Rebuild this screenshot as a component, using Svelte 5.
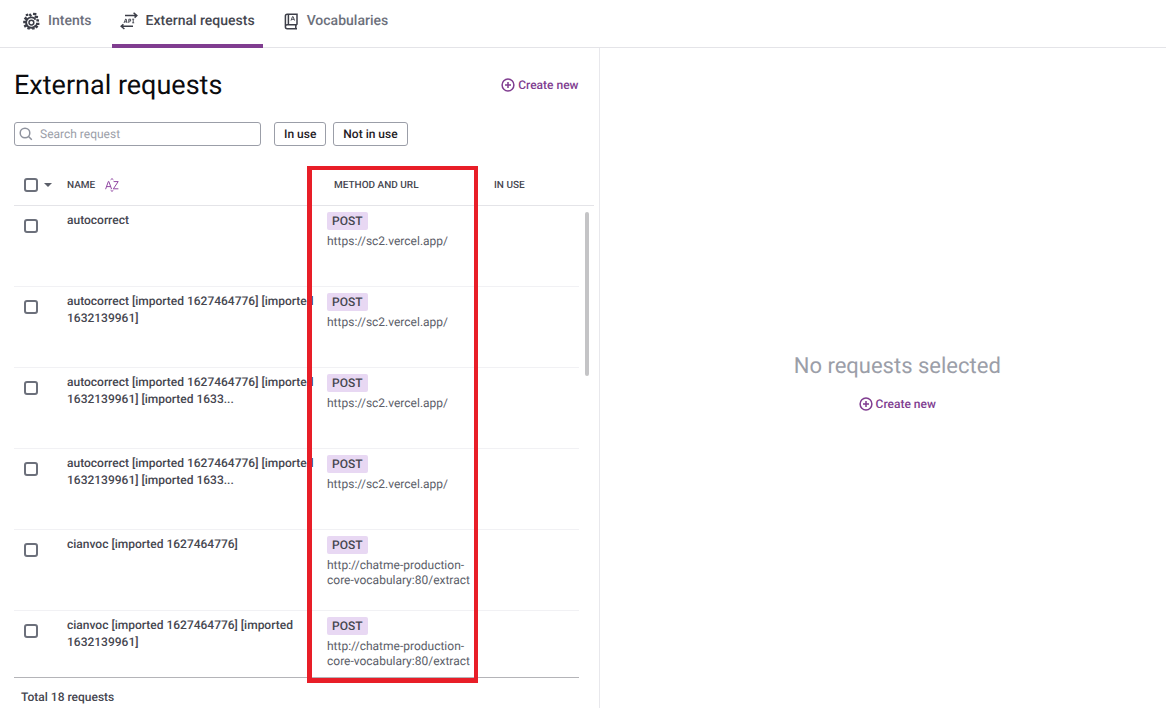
<script lang="ts">
  type ExternalRequest = {
    id: number;
    name: string;
    method: string;
    url: string;
  };

  const tabs = [
    { id: 'intents', label: 'Intents' },
    { id: 'requests', label: 'External requests' },
    { id: 'vocabularies', label: 'Vocabularies' }
  ];

  const total = 18;

  const requests: ExternalRequest[] = [
    { id: 1, name: 'autocorrect', method: 'POST', url: 'https://sc2.vercel.app/' },
    { id: 2, name: 'autocorrect [imported 1627464776] [imported 1632139961]', method: 'POST', url: 'https://sc2.vercel.app/' },
    { id: 3, name: 'autocorrect [imported 1627464776] [imported 1632139961] [imported 1633...', method: 'POST', url: 'https://sc2.vercel.app/' },
    { id: 4, name: 'autocorrect [imported 1627464776] [imported 1632139961] [imported 1633...', method: 'POST', url: 'https://sc2.vercel.app/' },
    { id: 5, name: 'cianvoc [imported 1627464776]', method: 'POST', url: 'http://chatme-production-core-vocabulary:80/extract' },
    { id: 6, name: 'cianvoc [imported 1627464776] [imported 1632139961]', method: 'POST', url: 'http://chatme-production-core-vocabulary:80/extract' }
  ];

  let activeTab = $state('requests');
  let search = $state('');
  let selected = $state<number[]>([]);

  let visible = $derived(
    requests.filter((item) => item.name.toLowerCase().includes(search.toLowerCase()))
  );

  function toggleAll(event: Event) {
    const checked = (event.currentTarget as HTMLInputElement).checked;
    selected = checked ? requests.map((item) => item.id) : [];
  }
</script>

{#snippet createButton()}
  <button class="create" type="button">
    <svg width="14" height="14" viewBox="0 0 14 14" fill="none" stroke="currentColor" stroke-width="1.5" aria-hidden="true">
      <circle cx="7" cy="7" r="5.9" />
      <path d="M7 4v6M4 7h6" />
    </svg>
    Create new
  </button>
{/snippet}

<div class="page">
  <nav class="tabs">
    {#each tabs as tab}
      <button
        class="tab"
        class:active={activeTab === tab.id}
        type="button"
        onclick={() => (activeTab = tab.id)}
      >
        {#if tab.id === 'intents'}
          <svg width="18" height="18" viewBox="0 0 18 18" fill="none" stroke="currentColor" aria-hidden="true">
            <circle cx="9.4" cy="10.6" r="2.4" stroke-width="1.5" />
            <path d="M13.6 7.6a5.2 5.2 0 1 0 .4 5.2" stroke-width="1.9" />
            <path d="M2.6 5.6l2.6 2M1.2 10h3M2.2 14.6l2.6-1.4M6.2 17.4l1-2.6M11.6 17.6l-.6-2.8M15.6 15.6l-2.2-1.8" stroke-width="2.6" />
            <path d="M3.8 3.2l2.4-.6M7.4 2l1.8 2.2M11 1.8l3.4.4M12.6 4.6l3.4.6M14.4 8.2l2.6.4M14 11.8h3.4" stroke-width="2.2" />
          </svg>
        {:else if tab.id === 'requests'}
          <svg width="18" height="18" viewBox="0 0 18 18" fill="none" stroke="currentColor" stroke-width="1.5" aria-hidden="true">
            <path d="M5 3.6h12M13.6.8l3.2 2.8-2.2 2M13 14.2H1M4.4 17l-3.2-2.8 2.2-2" />
            <path d="M4 11l1.6-4h.5l.9 4M4.8 9.8h2M8.8 11V7.2h1.8v1.9H8.8M12.2 7.2h2M13.2 7.2v3.6M12.2 10.8h2" stroke-width="0.9" />
          </svg>
        {:else}
          <svg width="16" height="18" viewBox="0 0 16 18" fill="none" stroke="currentColor" stroke-width="1.5" aria-hidden="true">
            <path d="M14 12.8V2.2H4.2c-1.1 0-1.8.8-1.8 1.8v11c0 1 .8 1.7 1.8 1.7H14M14 12.8H4.2c-2.4 0-2.4 3.9 0 3.9M5.4 2.2v10.6M12.8 12.8v3.9" />
            <path d="M8 8.6l1.5-4h.6l1.5 4M8.5 7.3h2.6" stroke-width="0.9" />
          </svg>
        {/if}
        {tab.label}
      </button>
    {/each}
  </nav>

  <main class="content">
    <section class="list-panel">
      <header class="heading">
        <h1>External requests</h1>
        {@render createButton()}
      </header>

      <div class="filters">
        <label class="search">
          <svg width="14" height="14" viewBox="0 0 14 14" fill="none" stroke="currentColor" stroke-width="1.5" aria-hidden="true">
            <circle cx="6" cy="6" r="4.8" />
            <path d="M9.5 9.5l3.3 3.3" />
          </svg>
          <input type="text" placeholder="Search request" aria-label="Search request" bind:value={search} />
        </label>
        <button class="filter" type="button">In use</button>
        <button class="filter" type="button">Not in use</button>
      </div>

      <div class="table-area">
        <div class="table-clip">
          <table>
            <colgroup>
              <col class="col-check" />
              <col class="col-name" />
              <col class="col-method" />
              <col />
              <col class="col-gutter" />
            </colgroup>
            <thead>
              <tr>
                <th>
                  <div class="check-all">
                    <input
                      type="checkbox"
                      aria-label="Select all requests"
                      checked={selected.length === requests.length}
                      onchange={toggleAll}
                    />
                    <button class="caret" type="button" aria-label="Selection options"></button>
                  </div>
                </th>
                <th>
                  <div class="sortable">
                    Name
                    <button class="sort" type="button" aria-label="Sort by name">
                      <svg width="14" height="14" viewBox="0 0 14 14" fill="none" stroke="currentColor" aria-hidden="true">
                        <path d="M.6 11.2L3.4 3.4h.4l2.8 7.8M1.6 8.6h4M8.6 3.6h4.6l-4.8 7.2h5" />
                        <path d="M5.6 1.8L7 .6l1.4 1.2M5.6 12.2L7 13.4l1.4-1.2" />
                      </svg>
                    </button>
                  </div>
                </th>
                <th class="method-head">Method and URL</th>
                <th>In use</th>
                <th></th>
              </tr>
            </thead>
            <tbody>
              {#each visible as item (item.id)}
                <tr>
                  <td class="check">
                    <input type="checkbox" aria-label={item.name} value={item.id} bind:group={selected} />
                  </td>
                  <td class="name">{item.name}</td>
                  <td class="method">
                    <span class="badge">{item.method}</span>
                    <div class="url">{item.url}</div>
                  </td>
                  <td></td>
                  <td class="gutter"></td>
                </tr>
              {/each}
            </tbody>
          </table>
        </div>
        <div class="scroll-thumb"></div>
        <div class="highlight"></div>
      </div>

      <footer class="total">Total {total} requests</footer>
    </section>

    <section class="detail-panel">
      <p class="empty">No requests selected</p>
      {@render createButton()}
    </section>
  </main>
</div>

<style>
  :global(body) {
    margin: 0;
    background: #fff;
  }

  .page {
    display: flex;
    flex-direction: column;
    height: 100vh;
    box-sizing: border-box;
    font-family: Roboto, 'Liberation Sans', sans-serif;
    font-size: 12px;
    text-rendering: geometricPrecision;
    color: #45464f;
  }

  button {
    padding: 0;
    border: 0;
    background: none;
    font: inherit;
    color: inherit;
    text-rendering: inherit;
    cursor: pointer;
  }

  .tabs {
    display: flex;
    flex: none;
    gap: 12px;
    height: 47px;
    padding-left: 14px;
    border-bottom: 1px solid #e4e4e8;
  }

  .tab {
    display: flex;
    align-items: center;
    gap: 8px;
    margin-bottom: -1px;
    padding: 0 8px 3px;
    border-bottom: 4px solid transparent;
    font-size: 14px;
    font-weight: 500;
    color: #6c707b;
  }

  .tab svg {
    color: #3c3e48;
  }

  .tab.active {
    border-bottom-color: #803d90;
    color: #45464f;
  }

  .content {
    display: flex;
    flex: 1;
    min-height: 0;
  }

  .list-panel {
    display: flex;
    flex-direction: column;
    width: 51.5%;
    box-sizing: border-box;
    padding: 0 5px 0 14px;
    border-right: 1px solid #e8e8ec;
  }

  .heading {
    display: flex;
    align-items: center;
    justify-content: space-between;
    height: 74px;
    padding-right: 16px;
  }

  h1 {
    margin: 0;
    font-size: 27px;
    font-weight: 400;
    color: #0c0c0e;
  }

  .create {
    display: flex;
    align-items: center;
    gap: 3px;
    font-size: 12px;
    font-weight: 500;
    color: #803d90;
  }

  .filters {
    display: flex;
    gap: 7px;
    height: 24px;
    margin-bottom: 19px;
  }

  .search {
    display: flex;
    align-items: center;
    gap: 7px;
    width: 247px;
    margin-right: 6px;
    padding: 0 4px;
    box-sizing: border-box;
    border: 1px solid #9b9ea8;
    border-radius: 3px;
    color: #8f939e;
  }

  .search input {
    flex: 1;
    min-width: 0;
    padding: 0;
    border: 0;
    outline: 0;
    background: none;
    font: inherit;
    text-rendering: inherit;
    color: #45464f;
  }

  .search input::placeholder {
    color: #9b9ea8;
  }

  .filter {
    padding: 0 9px;
    border: 1px solid #9b9ea8;
    border-radius: 3px;
    font-weight: 500;
    color: #1f2026;
  }

  .table-area {
    position: relative;
    flex: 1;
    min-height: 0;
  }

  .table-clip {
    height: 100%;
    overflow: hidden;
  }

  table {
    width: 100%;
    table-layout: fixed;
    border-collapse: separate;
    border-spacing: 0;
  }

  .col-check {
    width: 53px;
  }

  .col-name {
    width: 260px;
  }

  .col-method {
    width: 167px;
  }

  .col-gutter {
    width: 15px;
  }

  th {
    height: 40px;
    padding: 0;
    border-bottom: 1px solid #e4e4e8;
    font-size: 10px;
    font-weight: 500;
    text-align: left;
    text-transform: uppercase;
  }

  .method-head {
    padding-left: 7px;
  }

  .check-all,
  .sortable {
    display: flex;
    align-items: center;
  }

  .check-all {
    gap: 6px;
    padding-left: 10px;
  }

  .sortable {
    gap: 10px;
  }

  .sort {
    display: flex;
    color: #9148a3;
  }

  .caret {
    border: 4px solid transparent;
    border-top-color: #5b5e69;
    border-bottom: 0;
  }

  input[type='checkbox'] {
    appearance: none;
    display: block;
    width: 14px;
    height: 14px;
    margin: 0;
    border: 2px solid #6c707b;
    border-radius: 3px;
  }

  input[type='checkbox']:checked {
    border-color: #803d90;
    background: #803d90;
  }

  td {
    height: 81px;
    box-sizing: border-box;
    padding: 0;
    border-bottom: 1px solid #f1f1f4;
    vertical-align: top;
  }

  td.gutter {
    border-bottom: 0;
  }

  td.check {
    padding: 13px 0 0 10px;
  }

  td.name {
    padding: 6px 12px 0 0;
    font-weight: 500;
    line-height: 17px;
  }

  td.method {
    padding: 6px 20px 0 0;
  }

  .badge {
    display: block;
    width: fit-content;
    padding: 0 5px;
    border-radius: 2px;
    background: #e8d8f3;
    font-weight: 500;
    line-height: 18px;
  }

  .url {
    margin-top: 4px;
    line-height: 15px;
    color: #5b5e69;
  }

  .scroll-thumb {
    position: absolute;
    top: 47px;
    right: 5px;
    width: 4px;
    height: 164px;
    border-radius: 2px;
    background: #c4c4c6;
  }

  .highlight {
    position: absolute;
    top: 1px;
    bottom: -6px;
    left: 293px;
    width: 171px;
    box-sizing: border-box;
    border: 5px solid #e81e28;
    border-width: 4px 4px 5px 5px;
  }

  .total {
    height: 30px;
    margin-right: 15px;
    padding-left: 7px;
    border-top: 1px solid #b4b4b8;
    font-weight: 500;
    line-height: 38px;
    overflow: hidden;
  }

  .detail-panel {
    display: flex;
    flex: 1;
    flex-direction: column;
    align-items: center;
    justify-content: center;
    gap: 16px;
    padding: 8px 0 0 28px;
  }

  .empty {
    margin: 0;
    font-size: 22px;
    line-height: 28px;
    color: #9b9ea8;
  }
</style>
